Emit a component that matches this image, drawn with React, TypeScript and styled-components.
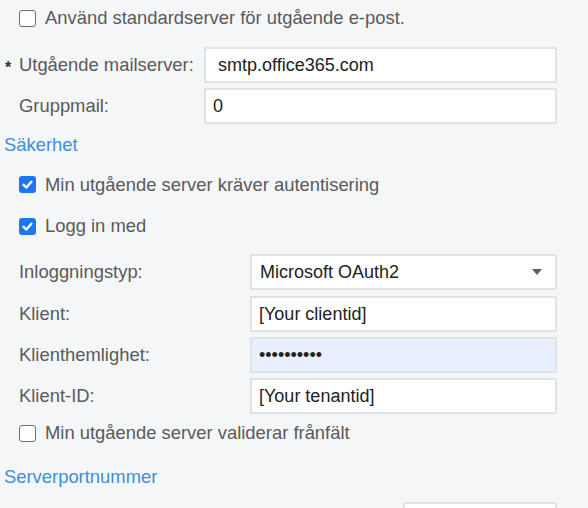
import React from 'react';
import styled, { createGlobalStyle } from 'styled-components';

const Global = createGlobalStyle`
  html, body { margin: 0; padding: 0; background: #f5f6f8; }
  body { font-family: "Liberation Sans", Arial, sans-serif; }
  * { box-sizing: border-box; }
`;

const Page = styled.div`
  width: 588px;
  height: 508px;
  overflow: hidden;
  background: #f5f6f8;
  padding-left: 4px;
  display: flex;
  flex-direction: column;
`;

const CheckRow = styled.label<{ $h: number; $mt?: number }>`
  display: flex;
  align-items: center;
  gap: 9px;
  height: ${(p) => p.$h}px;
  margin-top: ${(p) => p.$mt ?? 0}px;
  padding-left: 15px;
  font-size: 18.4px;
  color: #5a5a5a;
  flex-shrink: 0;
`;

const Box = styled.span<{ $checked?: boolean }>`
  width: 17px;
  height: 17px;
  border-radius: 3px;
  flex-shrink: 0;
  display: flex;
  align-items: center;
  justify-content: center;
  background: ${(p) => (p.$checked ? '#1b78f2' : '#ffffff')};
  border: ${(p) => (p.$checked ? 'none' : '1.5px solid #6f6f6f')};
`;

const Heading = styled.div<{ $mt: number }>`
  height: 30px;
  margin-top: ${(p) => p.$mt}px;
  display: flex;
  align-items: center;
  font-size: 18.4px;
  color: #3d8ee0;
  flex-shrink: 0;
`;

const Row = styled.div<{ $label: number; $mt: number }>`
  display: grid;
  grid-template-columns: 15px ${(p) => p.$label}px 1fr;
  align-items: center;
  height: 36px;
  margin-top: ${(p) => p.$mt}px;
  margin-right: 31px;
  flex-shrink: 0;
`;

const Star = styled.span`
  font-size: 16px;
  font-weight: bold;
  color: #333;
  padding-top: 6px;
  padding-left: 1px;
`;

const Label = styled.span`
  font-size: 18.4px;
  color: #5a5a5a;
  white-space: nowrap;
`;

const Input = styled.input<{ $fill?: boolean }>`
  height: 36px;
  width: 100%;
  border: 2px solid #e1e2e4;
  background: ${(p) => (p.$fill ? '#e8f0fe' : '#ffffff')};
  padding: 0 7px;
  font-family: "Liberation Sans", Arial, sans-serif;
  font-size: 18px;
  color: #222;
  outline: none;
  margin: 0;
`;

const Select = styled.div`
  height: 36px;
  border: 2px solid #e1e2e4;
  background: #fff;
  padding: 0 7px 0 8px;
  display: flex;
  align-items: center;
  justify-content: space-between;
  font-family: "Liberation Sans", Arial, sans-serif;
  font-size: 18px;
  color: #222;
`;

const Caret = styled.span`
  width: 0;
  height: 0;
  border-left: 5.5px solid transparent;
  border-right: 5.5px solid transparent;
  border-top: 6px solid #5e5e5e;
  margin-right: 6px;
`;

const PortRow = styled.div`
  display: flex;
  justify-content: flex-end;
  margin-top: 10px;
  margin-right: 31px;
  flex-shrink: 0;
`;

const PortInput = styled(Input)`
  width: 154px;
`;

const Check = () => (
  <svg width="13" height="13" viewBox="0 0 12 12">
    <path d="M2.4 6.3 L4.9 8.7 L9.6 3.5" fill="none" stroke="#fff" strokeWidth="2.2" strokeLinecap="round" strokeLinejoin="round" />
  </svg>
);

const CheckItem = ({ checked, text, h, mt }: { checked?: boolean; text: string; h: number; mt?: number }) => (
  <CheckRow $h={h} $mt={mt}>
    <Box $checked={checked}>{checked && <Check />}</Box>
    <span>{text}</span>
  </CheckRow>
);

export default function App() {
  return (
    <Page>
      <Global />
      <CheckItem h={36} text="Använd standardserver för utgående e-post." />
      <Row $label={185} $mt={11}>
        <Star>*</Star>
        <Label>Utgående mailserver:</Label>
        <Input readOnly value=" smtp.office365.com" />
      </Row>
      <Row $label={185} $mt={5}>
        <span />
        <Label>Gruppmail:</Label>
        <Input readOnly value="0" />
      </Row>
      <Heading $mt={6}>Säkerhet</Heading>
      <CheckItem h={41} mt={4} checked text="Min utgående server kräver autentisering" />
      <CheckItem h={42} checked text="Logg in med" />
      <Row $label={231} $mt={7}>
        <span />
        <Label>Inloggningstyp:</Label>
        <Select>
          <span>Microsoft OAuth2</span>
          <Caret />
        </Select>
      </Row>
      <Row $label={231} $mt={6}>
        <span />
        <Label>Klient:</Label>
        <Input readOnly value="[Your clientid]" />
      </Row>
      <Row $label={231} $mt={5}>
        <span />
        <Label>Klienthemlighet:</Label>
        <Input readOnly type="password" $fill value="xxxxxxxxxx" />
      </Row>
      <Row $label={231} $mt={5}>
        <span />
        <Label>Klient-ID:</Label>
        <Input readOnly value="[Your tenantid]" />
      </Row>
      <CheckItem h={38} text="Min utgående server validerar frånfält" />
      <Heading $mt={10}>Serverportnummer</Heading>
      <PortRow>
        <PortInput readOnly value="" />
      </PortRow>
    </Page>
  );
}
